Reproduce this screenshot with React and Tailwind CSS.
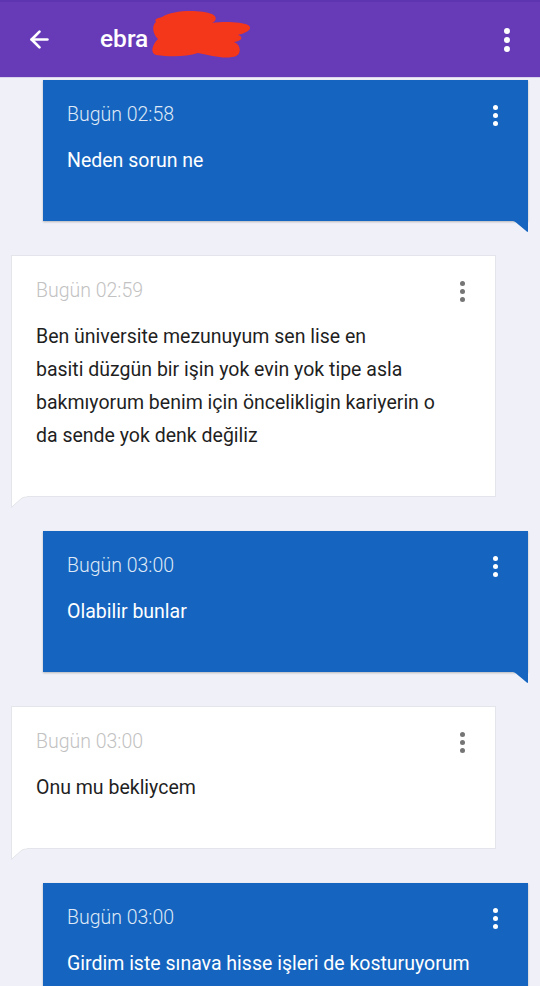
import { ArrowLeft } from 'lucide-react';

const messages = [
  { id: 1, mine: true, time: 'Bugün 02:58', text: ['Neden sorun ne'] },
  {
    id: 2,
    mine: false,
    time: 'Bugün 02:59',
    text: [
      'Ben üniversite mezunuyum sen lise en',
      'basiti düzgün bir işin yok evin yok tipe asla',
      'bakmıyorum benim için öncelikligin kariyerin o',
      'da sende yok denk değiliz',
    ],
  },
  { id: 3, mine: true, time: 'Bugün 03:00', text: ['Olabilir bunlar'] },
  { id: 4, mine: false, time: 'Bugün 03:00', text: ['Onu mu bekliycem'] },
  { id: 5, mine: true, time: 'Bugün 03:00', text: ['Girdim iste sınava hisse işleri de kosturuyorum'] },
];

const Kebab = ({ className }) => (
  <div className={`flex flex-col items-center gap-[3px] ${className}`}>
    <span className="w-[5px] h-[5px] rounded-full bg-current"></span>
    <span className="w-[5px] h-[5px] rounded-full bg-current"></span>
    <span className="w-[5px] h-[5px] rounded-full bg-current"></span>
  </div>
);

const Bubble = ({ msg }) => {
  const { mine } = msg;
  return (
    <div className={mine ? 'ml-[43px] mr-[12px]' : 'ml-[11px] mr-[44px]'}>
      <div
        className={`relative pl-[24px] pr-[30px] pt-[22px] pb-[44px] ${
          mine
            ? 'bg-[#1565c0] shadow-[0_1px_2px_rgba(0,0,0,0.25)]'
            : 'bg-white border border-[#e4e5ea]'
        }`}
      >
        <div className="flex items-center justify-between h-[26px]">
          <span
            className={`text-[19.5px] leading-[26px] font-light ${
              mine ? 'text-[#dfe8f6]' : 'text-[#c2c2c2]'
            }`}
          >
            {msg.time}
          </span>
          <Kebab className={mine ? 'text-white' : 'text-[#757575]'} />
        </div>
        <div
          className={`mt-[16px] text-[19.5px] leading-[33px] whitespace-nowrap ${
            mine ? 'text-white' : 'text-[#1f1f1f]'
          }`}
        >
          {msg.text.map((line, i) => (
            <div key={i}>{line}</div>
          ))}
        </div>

        {/* tail */}
        {mine ? (
          <svg className="absolute right-0 top-full" width="15" height="11" viewBox="0 0 15 11">
            <path d="M0 0 H15 V11 Q14 11 12 9 L3 1.5 Q1.5 0 0 0 Z" fill="#1565c0" />
          </svg>
        ) : (
          <svg className="absolute left-[-1px] top-full" width="16" height="12" viewBox="0 0 16 12">
            <path d="M1 -1 V11 L3 9 L11 2 Q13 1 16 1 V-1 Z" fill="#ffffff" />
            <path d="M0.5 0 V11.5 L3 9 L11 2 Q13 1 16 1" fill="none" stroke="#e4e5ea" strokeWidth="1" />
          </svg>
        )}
      </div>
    </div>
  );
};

export default function App() {
  return (
    <div
      className="w-[540px] h-[986px] overflow-hidden bg-[#f0f1f8] flex flex-col"
      style={{ fontFamily: 'Roboto, "Noto Sans", sans-serif' }}
    >
      {/* Header */}
      <div className="h-[78px] shrink-0 bg-[#673ab7] border-t-2 border-[#5e35b1] border-b border-b-[#d9d4ec] flex items-center px-[26px]">
        <ArrowLeft className="w-[27px] h-[27px] text-white" strokeWidth={2.4} />
        <div className="ml-[47px] flex items-center relative">
          <span className="text-white text-[24.5px] font-medium">ebra</span>
          {/* redaction scribble */}
          <svg className="absolute left-[50px] top-[-12px]" width="106" height="52" viewBox="0 0 106 52">
            <path
              d="M12 8 C24 0 52 1 62 5 C68 8 66 12 62 14 C74 12 92 13 98 16 C104 20 96 24 88 26 C94 28 92 32 84 33 C92 36 92 48 82 48 C72 50 60 46 48 44 C36 48 20 48 6 46 C0 44 2 36 8 30 C2 24 2 16 6 13 C4 10 8 9 12 8 Z"
              fill="#f4361a"
            />
          </svg>
        </div>
        <Kebab className="ml-auto text-white gap-[3px] [&>span]:w-[6px] [&>span]:h-[6px] mr-[4px]" />
      </div>

      {/* Messages */}
      <div className="flex flex-col gap-[34px] pt-[2px]">
        {messages.map((m) => (
          <Bubble key={m.id} msg={m} />
        ))}
      </div>
    </div>
  );
}
